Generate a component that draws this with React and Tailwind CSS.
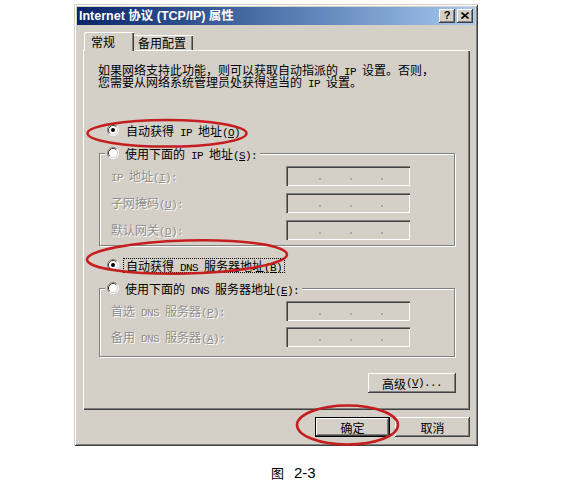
import React from "react";

const A = ({ children }) => (
  <span className="font-['Liberation_Mono',monospace] text-[11px] leading-[11px] tracking-[-0.6px]">{children}</span>
);
const U = ({ children }) => <span className="underline underline-offset-[1px]">{children}</span>;

function Radio({ checked }) {
  return (
    <svg width="12" height="12" viewBox="0 0 12 12" className="shrink-0">
      <circle cx="6" cy="6" r="5" fill="#fff" />
      <path d="M2.11 9.89 A5.5 5.5 0 0 1 9.89 2.11" fill="none" stroke="#808080" strokeWidth="1" />
      <path d="M9.89 2.11 A5.5 5.5 0 0 1 2.11 9.89" fill="none" stroke="#ffffff" strokeWidth="1" />
      <path d="M2.82 9.18 A4.5 4.5 0 0 1 9.18 2.82" fill="none" stroke="#404040" strokeWidth="1" />
      <path d="M9.18 2.82 A4.5 4.5 0 0 1 2.82 9.18" fill="none" stroke="#d4d0c8" strokeWidth="1" />
      {checked && <circle cx="6" cy="6" r="2" fill="#000" />}
    </svg>
  );
}

function RadioRow({ className, checked, focus, children }) {
  return (
    <div className={`flex items-center h-[16px] shrink-0 ${className}`}>
      <Radio checked={checked} />
      <span
        className={`ml-[4px] h-[15px] flex items-center px-[2px] whitespace-nowrap text-[12px] leading-[13px] border ${
          focus ? "border-dotted border-black" : "border-transparent"
        }`}
      >
        <span className="h-[13px] leading-[13px]">{children}</span>
      </span>
    </div>
  );
}

function IpBox() {
  return (
    <div className="w-[124px] h-[20px] shrink-0 flex items-center pl-[33px] gap-[29px] pt-[5px] shadow-[inset_1px_1px_0_#808080,inset_2px_2px_0_#404040,inset_-1px_-1px_0_#fff,inset_-2px_-2px_0_#d4d0c8]">
      <span className="w-[2px] h-[2px] bg-[#a8a8a8]" />
      <span className="w-[2px] h-[2px] bg-[#a8a8a8]" />
      <span className="w-[2px] h-[2px] bg-[#a8a8a8]" />
    </div>
  );
}

function Field({ className, children }) {
  return (
    <div className={`flex items-center h-[20px] shrink-0 pl-[11px] ${className}`}>
      <span className="w-[175px] h-[13px] leading-[13px] -mt-[2px] whitespace-nowrap text-[12px] text-[#8e8e8e] [text-shadow:1px_1px_0_#fff]">
        {children}
      </span>
      <IpBox />
    </div>
  );
}

function Group({ className, legend, children }) {
  return (
    <div
      className={`ml-[16px] w-[356px] shrink-0 flex flex-col border border-[#808080] shadow-[inset_1px_1px_0_#fff,1px_1px_0_#fff] ${className}`}
    >
      <div className="-mt-[9px] ml-[5px] w-fit h-[16px] shrink-0 flex items-center bg-[#d4d0c8] pl-[2px] pr-[3px]">
        <Radio />
        <span className="ml-[6px] h-[13px] whitespace-nowrap text-[12px] leading-[13px]">{legend}</span>
      </div>
      {children}
    </div>
  );
}

function Button({ className, children, def }) {
  return (
    <div
      className={`h-[20px] shrink-0 flex items-center justify-center text-[12px] leading-[13px] whitespace-nowrap ${
        def
          ? "border border-black shadow-[inset_-1px_-1px_0_#404040,inset_1px_1px_0_#fff,inset_-2px_-2px_0_#808080]"
          : "shadow-[inset_-1px_-1px_0_#404040,inset_1px_1px_0_#fff,inset_-2px_-2px_0_#808080]"
      } ${className}`}
    >
      {children}
    </div>
  );
}

function TitleBar() {
  return (
    <div className="h-[18px] shrink-0 flex items-center bg-gradient-to-r from-[#0a246a] to-[#a6caf0] pl-[2px] pr-[2px]">
      <span className="text-white font-bold text-[12.5px] leading-[14px] whitespace-nowrap font-['Liberation_Sans','Noto_Sans_CJK_SC',sans-serif]">
        Internet 协议 (TCP/IP) 属性
      </span>
      <div className="ml-auto flex gap-[2px]">
        <div className="w-[16px] h-[14px] bg-[#d4d0c8] flex items-center justify-center shadow-[inset_-1px_-1px_0_#404040,inset_1px_1px_0_#fff,inset_-2px_-2px_0_#808080]">
          <span className="font-['Liberation_Sans',sans-serif] font-bold text-[11px] leading-[11px] text-black -mt-[1px]">?</span>
        </div>
        <div className="w-[16px] h-[14px] bg-[#d4d0c8] flex items-center justify-center shadow-[inset_-1px_-1px_0_#404040,inset_1px_1px_0_#fff,inset_-2px_-2px_0_#808080]">
          <svg width="8" height="7" viewBox="0 0 8 7" className="-mt-[1px]">
            <path d="M0.5 0.5 L7.5 6.5 M7.5 0.5 L0.5 6.5" stroke="#000" strokeWidth="1.6" />
          </svg>
        </div>
      </div>
    </div>
  );
}

function Tabs() {
  return (
    <div className="flex items-end h-[18px] shrink-0 pl-[1px]">
      <div className="relative z-10 -mb-px h-[19px] w-[50px] bg-[#d4d0c8] rounded-tl-[2px] flex items-center pl-[7px] text-[12px] leading-[13px] shadow-[inset_1px_1px_0_#fff,inset_-1px_0_0_#404040,inset_-2px_0_0_#808080]">
        常规
      </div>
      <div className="h-[15px] w-[59px] flex items-center pl-[4px] text-[12px] leading-[13px] shadow-[inset_0_1px_0_#fff,inset_-1px_0_0_#404040,inset_-2px_0_0_#808080]">
        备用配置
      </div>
    </div>
  );
}

function Panel() {
  return (
    <div className="h-[360px] shrink-0 flex flex-col shadow-[inset_1px_1px_0_#fff,inset_-1px_-1px_0_#404040,inset_-2px_-2px_0_#808080]">
      <div className="mt-[14px] ml-[15px] text-[12px] whitespace-nowrap flex flex-col shrink-0">
        <div className="h-[12px] leading-[12px]">如果网络支持此功能，则可以获取自动指派的<A> IP </A>设置。否则，</div>
        <div className="h-[12px] leading-[12px]">您需要从网络系统管理员处获得适当的<A> IP </A>设置。</div>
      </div>
      <RadioRow className="mt-[34px] ml-[24px]" checked>
        自动获得<A> IP </A>地址<A>(<U>O</U>)</A>
      </RadioRow>
      <Group
        className="mt-[15px] h-[93px]"
        legend={
          <>
            使用下面的<A> IP </A>地址<A>(<U>S</U>):</A>
          </>
        }
      >
        <Field className="mt-[5px]">
          <A>IP </A>地址<A>(<U>I</U>):</A>
        </Field>
        <Field className="mt-[7px]">
          子网掩码<A>(<U>U</U>):</A>
        </Field>
        <Field className="mt-[7px]">
          默认网关<A>(<U>D</U>):</A>
        </Field>
      </Group>
      <RadioRow className="mt-[11px] ml-[24px]" checked focus>
        自动获得<A> DNS </A>服务器地址<A>(<U>B</U>)</A>
      </RadioRow>
      <Group
        className="mt-[15px] h-[69px]"
        legend={
          <>
            使用下面的<A> DNS </A>服务器地址<A>(<U>E</U>):</A>
          </>
        }
      >
        <Field className="mt-[5px]">
          首选<A> DNS </A>服务器<A>(<U>P</U>):</A>
        </Field>
        <Field className="mt-[6px]">
          备用<A> DNS </A>服务器<A>(<U>A</U>):</A>
        </Field>
      </Group>
      <div className="mt-[16px] flex justify-end pr-[14px] shrink-0">
        <Button className="w-[88px]">
          高级<A>(<U>V</U>)...</A>
        </Button>
      </div>
    </div>
  );
}

export default function App() {
  return (
    <div className="relative w-[579px] h-[492px] bg-white text-black overflow-hidden font-['Noto_Sans_CJK_SC',sans-serif]">
      <div className="pt-[4px] pl-[74px]">
        <div className="w-[404px] h-[442px] bg-[#d4d0c8] p-[3px] flex flex-col shadow-[inset_1px_1px_0_#d4d0c8,inset_-1px_-1px_0_#404040,inset_2px_2px_0_#fff,inset_-2px_-2px_0_#808080]">
          <TitleBar />
          <div className="flex flex-col pl-[6px] pr-[5px] pt-[7px]">
            <Tabs />
            <Panel />
            <div className="mt-[7px] flex justify-end gap-[5px] shrink-0">
              <Button def className="w-[75px]">确定</Button>
              <Button className="w-[75px]">取消</Button>
            </div>
          </div>
        </div>
      </div>
      <div className="mt-[17px] pl-[271px] h-[20px] flex items-center">
        <span className="text-[13px] leading-[14px]">图</span>
        <span className="ml-[10px] font-['Liberation_Sans',sans-serif] text-[15px] leading-[16px]">2-3</span>
      </div>
      <svg className="absolute left-0 top-0 pointer-events-none" width="579" height="492" viewBox="0 0 579 492">
        <ellipse cx="167" cy="133.3" rx="79.5" ry="13.3" fill="none" stroke="#c41e1e" strokeWidth="2.5" />
        <ellipse cx="187" cy="257" rx="100" ry="16.5" fill="none" stroke="#c41e1e" strokeWidth="2.5" transform="rotate(-1.5 187 257)" />
        <ellipse cx="347.5" cy="425" rx="50.5" ry="19.5" fill="none" stroke="#c41e1e" strokeWidth="2.5" />
      </svg>
    </div>
  );
}
